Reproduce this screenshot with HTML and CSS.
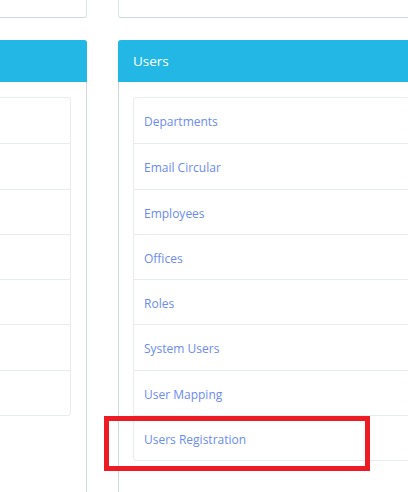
FILE: index.html
```html
<!DOCTYPE html>
<html>
<head>
<meta charset="utf-8">
<link rel="stylesheet" href="styles.css">
</head>
<body>
<div class="grid">
  <div class="col">
    <div class="card"></div>
    <div class="panel">
      <div class="panel-heading">&nbsp;</div>
      <div class="panel-body">
        <ul class="list">
          <li class="item">&nbsp;</li>
          <li class="item">&nbsp;</li>
          <li class="item">&nbsp;</li>
          <li class="item">&nbsp;</li>
          <li class="item">&nbsp;</li>
          <li class="item">&nbsp;</li>
          <li class="item">&nbsp;</li>
        </ul>
      </div>
    </div>
  </div>
  <div class="col">
    <div class="card"></div>
    <div class="panel">
      <div class="panel-heading">Users</div>
      <div class="panel-body">
        <ul class="list">
          <li class="item"><a href="#">Departments</a></li>
          <li class="item"><a href="#">Email Circular</a></li>
          <li class="item"><a href="#">Employees</a></li>
          <li class="item"><a href="#">Offices</a></li>
          <li class="item"><a href="#">Roles</a></li>
          <li class="item"><a href="#">System Users</a></li>
          <li class="item"><a href="#">User Mapping</a></li>
          <li class="item"><a href="#">Users Registration</a><span class="mark"></span></li>
        </ul>
      </div>
    </div>
  </div>
</div>
</body>
</html>
```

FILE: styles.css
```css
html, body {
  margin: 0;
  padding: 0;
  background: #ffffff;
  overflow: hidden;
  height: 492px;
}
body {
  font-family: "Open Sans", "Liberation Sans", sans-serif;
  font-size: 12px;
  color: #58666e;
}
.grid {
  display: flex;
  gap: 31px;
  margin-left: -213px;
}
.col {
  width: 300px;
  flex: none;
}
.col + .col {
  width: 420px;
}
.card {
  margin-top: -20px;
  height: 36px;
  border: 1px solid #dee5e7;
  border-bottom-color: #cfdadd;
  border-radius: 3px;
  background: #fff;
}
.panel {
  margin-top: 22px;
  border: 1px solid #cfdadd;
  border-radius: 3px;
  height: 460px;
}
.panel-heading {
  margin: -1px -1px 0;
  height: 42px;
  box-sizing: border-box;
  padding: 0 15px;
  line-height: 42px;
  background: #23b7e5;
  color: #ffffff;
  font-size: 13.5px;
  border-radius: 3px 3px 0 0;
}
.panel-body {
  padding: 15px 15px 15px 14px;
}
.list {
  list-style: none;
  margin: 0;
  padding: 0;
  border: 1px solid #e7ecee;
  border-radius: 3px;
}
.item {
  position: relative;
  height: 18.25px;
  padding: 15px 10px 11px;
  line-height: 18.25px;
  font-size: 12px;
  border-top: 1px solid #e7ecee;
}
.item:first-child {
  border-top: 0;
  height: 19.25px;
}
.item a {
  color: #6b8cee;
  text-decoration: none;
}
.mark {
  position: absolute;
  left: -30px;
  top: 0;
  width: 256px;
  height: 45px;
  border: 5px solid #ed1c24;
}
```
